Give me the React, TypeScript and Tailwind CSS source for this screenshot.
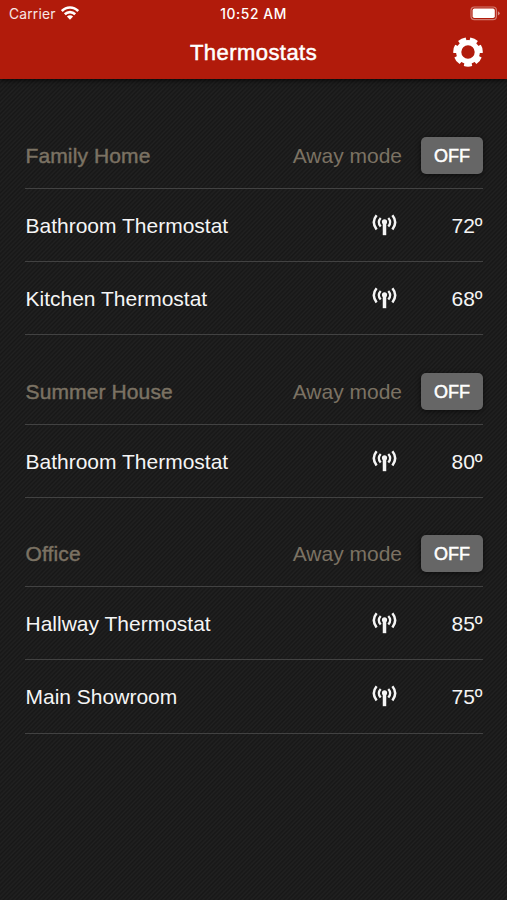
type Thermostat = {
    name: string;
    temp: number;
};

type Place = {
    name: string;
    thermostats: Thermostat[];
};

const places: Place[] = [
    {
        name: 'Family Home',
        thermostats: [
            { name: 'Bathroom Thermostat', temp: 72 },
            { name: 'Kitchen Thermostat', temp: 68 },
        ],
    },
    {
        name: 'Summer House',
        thermostats: [{ name: 'Bathroom Thermostat', temp: 80 }],
    },
    {
        name: 'Office',
        thermostats: [
            { name: 'Hallway Thermostat', temp: 85 },
            { name: 'Main Showroom', temp: 75 },
        ],
    },
];

// seven teeth, one pointing straight down
const teeth = [0, 1, 2, 3, 4, 5, 6];

function GearIcon() {
    return (
        <svg viewBox="-15 -15 30 30" className="w-[30px] h-[30px]">
            <circle r="9.3" fill="none" stroke="#fff" strokeWidth="5.2" />
            {teeth.map((i) => (
                <path key={i} d="M-3.4 10 L-4.2 14.1 Q0 15.6 4.2 14.1 L3.4 10 Z" fill="#fff" transform={`rotate(${(i * 360) / 7})`} />
            ))}
        </svg>
    );
}

function SignalIcon() {
    return (
        <svg viewBox="0 0 26 22" className="w-[26px] h-[22px]" fill="none" stroke="#f5f5f5" strokeLinecap="butt">
            <path d="M4.6 1.2 Q-1 8.2 4.6 15.4 M20.4 1.2 Q26 8.2 20.4 15.4" strokeWidth="2.5" />
            <path d="M8.7 3.9 Q4.9 8.2 8.7 12.6 M16.3 3.9 Q20.1 8.2 16.3 12.6" strokeWidth="2.3" />
            <circle cx="12.5" cy="7.8" r="2.6" fill="#f5f5f5" stroke="none" />
            <path d="M12.5 8.5 V21.2" strokeWidth="3.5" />
        </svg>
    );
}

function WifiIcon() {
    return (
        <svg viewBox="0 0 18 14" className="w-[18px] h-[14px] -mt-px" fill="none" stroke="#fff" strokeWidth="2.6">
            <path d="M.8 5.1 C5.4 .3 12.6 .3 17.2 5.1" />
            <path d="M3.8 8.3 C6.8 5.4 11.2 5.4 14.2 8.3" />
            <path d="M9 13.8 L5.9 10.6 Q9 8.1 12.1 10.6 Z" fill="#fff" stroke="none" />
        </svg>
    );
}

function BatteryIcon() {
    return (
        <svg viewBox="0 0 31 15" className="w-[31px] h-[15px]">
            <rect x="1" y="1" width="25.4" height="12.6" rx="3.4" fill="none" stroke="#fff" strokeOpacity=".42" strokeWidth="1.2" />
            <rect x="2.6" y="2.6" width="22.2" height="9.4" rx="1.8" fill="#fff" />
            <path d="M27.9 5.2 Q29.7 6 29.7 7.3 Q29.7 8.6 27.9 9.4 Z" fill="#fff" fillOpacity=".5" />
        </svg>
    );
}

function Header() {
    return (
        <header className="relative h-[79px] bg-[#b11b0b] text-white shadow-[0_1px_5px_rgba(0,0,0,0.8)]">
            <div className="grid grid-cols-3 items-center h-[27px] pl-[9px] pr-[6px] font-['Inter','Liberation_Sans',sans-serif] text-[14px]">
                <div className="flex items-center gap-[5px]">
                    <span className="pt-px text-[13.8px] tracking-[0.2px] text-white/90">Carrier</span>
                    <WifiIcon />
                </div>
                <span className="-ml-[3px] pt-px text-center text-[13.8px] font-medium tracking-[0.6px]">10:52 AM</span>
                <div className="flex justify-end">
                    <BatteryIcon />
                </div>
            </div>
            <div className="grid grid-cols-[1fr_auto_1fr] items-center h-[50px] pr-[24px] pl-[24px]">
                <h1 className="col-start-2 text-[22px] tracking-[0.45px] [-webkit-text-stroke:0.5px_#fff]">Thermostats</h1>
                <button className="justify-self-end" aria-label="Settings">
                    <GearIcon />
                </button>
            </div>
        </header>
    );
}

function ThermostatRow({ thermostat }: { thermostat: Thermostat }) {
    return (
        <li className="flex items-center h-[73.2px] border-b border-[#424242] text-[21px] text-[#f5f5f5]">
            <span className="flex-1 pt-[1.6px] pl-[0.5px]">{thermostat.name}</span>
            <SignalIcon />
            <span className="w-[85px] pt-[1.6px] pr-[0.5px] text-right">{thermostat.temp}º</span>
        </li>
    );
}

function PlaceSection({ place }: { place: Place }) {
    return (
        <section className="mb-[24px]">
            <div className="flex items-center h-[65.3px] border-b border-[#424242] text-[21px] text-[#7b7263]">
                <h2 className="flex-1 pl-[0.5px] text-[21px] tracking-[0.12px] [-webkit-text-stroke:0.45px_#7b7263]">{place.name}</h2>
                <span className="mr-[19px]">Away mode</span>
                <button className="w-[62px] h-[37px] -mt-px rounded-[5px] bg-[#666] pt-[2px] text-[18px] text-white shadow-[0_1px_5px_rgba(0,0,0,0.6)] [-webkit-text-stroke:0.5px_#fff]">
                    OFF
                </button>
            </div>
            <ul>
                {place.thermostats.map((thermostat) => (
                    <ThermostatRow key={thermostat.name} thermostat={thermostat} />
                ))}
            </ul>
        </section>
    );
}

export default function App() {
    return (
        <div className="w-[507px] h-[900px] overflow-hidden bg-[#1c1c1c] bg-[repeating-linear-gradient(135deg,#171717_0px,#212121_1.55px,#171717_3.1px)] font-['Liberation_Sans',Arial,sans-serif]">
            <Header />
            <main className="pl-[25px] pr-[24px] pt-[44.7px]">
                {places.map((place) => (
                    <PlaceSection key={place.name} place={place} />
                ))}
            </main>
        </div>
    );
}
